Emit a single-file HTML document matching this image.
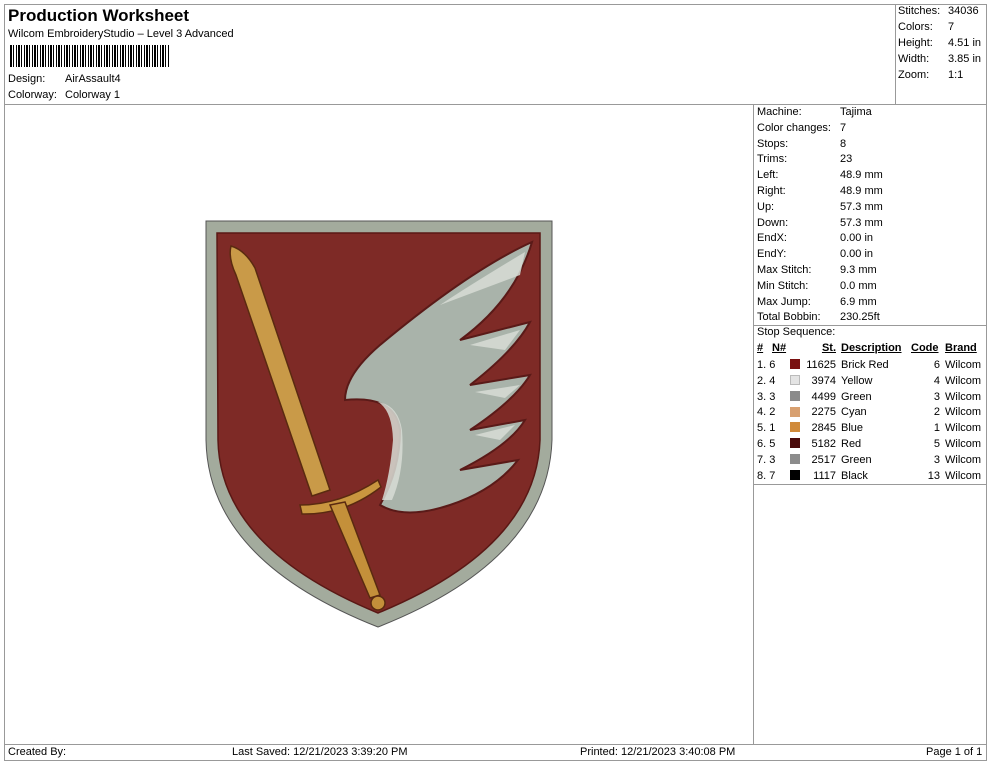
<!DOCTYPE html>
<html><head><meta charset="utf-8"><style>
*{margin:0;padding:0;box-sizing:border-box}
body{width:990px;height:762px;background:#fff;font-family:"Liberation Sans",Arial,sans-serif;font-size:11px;color:#000;position:relative;overflow:hidden}
.a{position:absolute;white-space:nowrap;line-height:13px}
.l{position:absolute;background:#999}
.sw{position:absolute;width:10px;height:10px}
u{text-decoration:underline;font-weight:bold}
</style></head><body>
<div class="l" style="left:4px;top:4px;width:983px;height:1px"></div>
<div class="l" style="left:4px;top:4px;width:1px;height:757px"></div>
<div class="l" style="left:986px;top:4px;width:1px;height:757px"></div>
<div class="l" style="left:4px;top:104px;width:983px;height:1px"></div>
<div class="l" style="left:895px;top:4px;width:1px;height:100px"></div>
<div class="l" style="left:753px;top:104px;width:1px;height:640px"></div>
<div class="l" style="left:753px;top:325px;width:234px;height:1px"></div>
<div class="l" style="left:753px;top:484px;width:234px;height:1px"></div>
<div class="l" style="left:4px;top:744px;width:983px;height:1px"></div>
<div class="l" style="left:4px;top:760px;width:983px;height:1px"></div>

<div class="a" style="left:8px;top:6px;font-size:17px;font-weight:bold;line-height:20px">Production Worksheet</div>
<div class="a" style="left:8px;top:28px">Wilcom EmbroideryStudio – Level 3 Advanced</div>
<div class="a" style="left:10px;top:45px;width:160px;height:22px;background:repeating-linear-gradient(90deg,#000 0 2px,#fff 2px 3px,#000 3px 4px,#fff 4px 6px,#000 6px 7px,#fff 7px 8px)"></div>
<div class="a" style="left:8px;top:73px">Design:</div><div class="a" style="left:65px;top:73px">AirAssault4</div>
<div class="a" style="left:8px;top:89px">Colorway:</div><div class="a" style="left:65px;top:89px">Colorway 1</div>

<div class="a" style="left:898px;top:5px">Stitches:</div><div class="a" style="left:948px;top:5px">34036</div>
<div class="a" style="left:898px;top:21px">Colors:</div><div class="a" style="left:948px;top:21px">7</div>
<div class="a" style="left:898px;top:37px">Height:</div><div class="a" style="left:948px;top:37px">4.51 in</div>
<div class="a" style="left:898px;top:53px">Width:</div><div class="a" style="left:948px;top:53px">3.85 in</div>
<div class="a" style="left:898px;top:69px">Zoom:</div><div class="a" style="left:948px;top:69px">1:1</div>

<div class="a" style="left:757px;top:105px;line-height:15.8px">Machine:<br>Color changes:<br>Stops:<br>Trims:<br>Left:<br>Right:<br>Up:<br>Down:<br>EndX:<br>EndY:<br>Max Stitch:<br>Min Stitch:<br>Max Jump:<br>Total Bobbin:</div>
<div class="a" style="left:840px;top:105px;line-height:15.8px">Tajima<br>7<br>8<br>23<br>48.9 mm<br>48.9 mm<br>57.3 mm<br>57.3 mm<br>0.00 in<br>0.00 in<br>9.3 mm<br>0.0 mm<br>6.9 mm<br>230.25ft</div>
<div class="a" style="left:757px;top:326px">Stop Sequence:</div>

<div class="a" style="left:757px;top:342px"><u>#</u></div>
<div class="a" style="left:772px;top:342px"><u>N#</u></div>
<div class="a" style="left:808px;top:342px;width:28px;text-align:right"><u>St.</u></div>
<div class="a" style="left:841px;top:342px"><u>Description</u></div>
<div class="a" style="left:911px;top:342px"><u>Code</u></div>
<div class="a" style="left:945px;top:342px"><u>Brand</u></div>

<div class="a" style="left:757px;top:358px;line-height:15.8px">1. 6<br>2. 4<br>3. 3<br>4. 2<br>5. 1<br>6. 5<br>7. 3<br>8. 7</div>
<div class="sw" style="left:790px;top:359px;background:#7a1010"></div>
<div class="sw" style="left:790px;top:375px;background:#e4e4e4;border:1px solid #bbb"></div>
<div class="sw" style="left:790px;top:391px;background:#8a8a8a"></div>
<div class="sw" style="left:790px;top:407px;background:#d8a070"></div>
<div class="sw" style="left:790px;top:422px;background:#d08a3a"></div>
<div class="sw" style="left:790px;top:438px;background:#4a0a0a"></div>
<div class="sw" style="left:790px;top:454px;background:#8c8c8c"></div>
<div class="sw" style="left:790px;top:470px;background:#000"></div>
<div class="a" style="left:800px;top:358px;width:36px;text-align:right;line-height:15.8px">11625<br>3974<br>4499<br>2275<br>2845<br>5182<br>2517<br>1117</div>
<div class="a" style="left:841px;top:358px;line-height:15.8px">Brick Red<br>Yellow<br>Green<br>Cyan<br>Blue<br>Red<br>Green<br>Black</div>
<div class="a" style="left:915px;top:358px;width:25px;text-align:right;line-height:15.8px">6<br>4<br>3<br>2<br>1<br>5<br>3<br>13</div>
<div class="a" style="left:945px;top:358px;line-height:15.8px">Wilcom<br>Wilcom<br>Wilcom<br>Wilcom<br>Wilcom<br>Wilcom<br>Wilcom<br>Wilcom</div>

<div class="a" style="left:8px;top:746px">Created By:</div>
<div class="a" style="left:232px;top:746px">Last Saved: 12/21/2023 3:39:20 PM</div>
<div class="a" style="left:580px;top:746px">Printed: 12/21/2023 3:40:08 PM</div>
<div class="a" style="left:926px;top:746px">Page 1 of 1</div>

<svg style="position:absolute;left:0;top:0" width="990" height="762">
<path d="M206,221 H552 V440 Q548,560 378,627 Q208,560 206,440 Z" fill="#a3ab9d" stroke="#555" stroke-width="1"/>
<path d="M217,233 H540 V440 Q536,548 378,613 Q220,548 218,440 Z" fill="#7e2a26" stroke="#5a1815" stroke-width="1.5"/>
<g fill="#a9b3aa" stroke="#5a1a18" stroke-width="2">
<path d="M532,242 Q470,270 380,345 Q345,375 345,400 Q395,395 400,430 Q400,470 380,505 Q405,520 450,505 Q495,490 518,460 L460,470 Q510,445 525,420 L470,430 Q515,400 530,375 L470,385 Q515,350 530,322 L460,340 Q515,300 532,242 Z"/>
</g>
<g fill="#d8ddd6" opacity=".85">
<path d="M525,252 Q470,285 440,305 L520,275 Z"/>
<path d="M520,330 L470,345 L505,350 Z"/>
<path d="M520,385 L475,392 L505,398 Z"/>
<path d="M515,425 L475,435 L500,440 Z"/>
<path d="M378,402 Q392,410 393,440 Q390,475 382,500 L392,500 Q405,470 402,430 Q398,405 378,402 Z"/>
</g>
<g stroke="#5a2a10" stroke-width="1.5">
<path d="M231,246 Q245,250 255,268 L330,490 L312,496 L236,275 Q228,258 231,246 Z" fill="#c99a48"/>
<path d="M300,505 Q340,505 378,480 L381,487 Q345,515 302,514 Z" fill="#c9963f"/>
<path d="M330,505 L345,502 L380,595 L370,598 Z" fill="#c4903a"/>
<circle cx="378" cy="603" r="7" fill="#c4903a"/>
</g>
</svg>
</body></html>
